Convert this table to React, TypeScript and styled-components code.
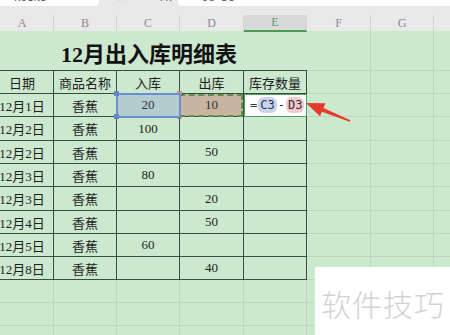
import React from "react";
import styled, { createGlobalStyle, css } from "styled-components";

const GlobalStyle = createGlobalStyle`
  html, body {
    margin: 0;
    padding: 0;
    width: 450px;
    height: 335px;
    overflow: hidden;
    background: #cce8cf;
  }
  * {
    box-sizing: border-box;
  }
`;

const COLUMNS = "63px 63px 63px 64px 63px 64px 63px 63px";
const ROWS = "40px 23px 23px 24px 23px 23px 24px 23px 23px 23px 23px 23px 23px";
const TEXT_FONT = `"Liberation Serif", "Noto Sans CJK SC", serif`;

const Page = styled.div`
  position: relative;
  width: 450px;
  height: 335px;
  overflow: hidden;
  font-family: ${TEXT_FONT};
  color: #1e1e1e;
`;

/* formula bar, scrolled so only its lower edge shows */
const FormulaBar = styled.div`
  display: flex;
  height: 6px;
  overflow: hidden;
  background: #e9e9e9;
  font-family: "Liberation Mono", monospace;
  font-size: 11px;
  color: #555;
`;

const NameBox = styled.div`
  width: 99px;
  display: flex;
  align-items: flex-end;
  padding-left: 14px;
  background: #fff;
  border-bottom-right-radius: 4px;
  & > span {
    line-height: 10px;
    margin-bottom: 3px;
  }
`;

const FxBox = styled.div`
  width: 79px;
  display: flex;
  align-items: flex-end;
  gap: 22px;
  padding-left: 18px;
  & > span {
    line-height: 10px;
    margin-bottom: 3px;
  }
`;

const FormulaInput = styled.div`
  flex: 1;
  display: flex;
  align-items: flex-end;
  padding-left: 17px;
  background: #fff;
  border-bottom-left-radius: 4px;
  & > span {
    line-height: 10px;
    margin-bottom: 3px;
  }
`;

const Gap = styled.div`
  height: 9px;
  background: #e9e9e9;
`;

const HeadRow = styled.div`
  display: grid;
  grid-template-columns: ${COLUMNS};
  height: 16px;
  margin-left: -9px;
  background: #e9e9e9;
`;

const HeadCell = styled.div<{ $active?: boolean }>`
  display: flex;
  align-items: center;
  justify-content: center;
  border-right: 1px solid #d3d3d3;
  font-family: "Liberation Serif", serif;
  font-size: 12px;
  color: #8a8a8a;
  ${(p) =>
    p.$active &&
    css`
      background: #d9d9d9;
      color: #5f9a63;
      border-bottom: 2px solid #4a9a55;
    `}
`;

const Sheet = styled.div`
  display: grid;
  grid-template-columns: ${COLUMNS};
  grid-template-rows: ${ROWS};
  margin-left: -9px;
`;

type Mark = "picked" | "marked" | "editing";

const Cell = styled.div<{ $table?: boolean; $mark?: Mark }>`
  position: relative;
  display: flex;
  align-items: center;
  justify-content: center;
  font-size: 13px;
  white-space: nowrap;
  border-right: 1px solid ${(p) => (p.$table ? "#34503b" : "#bcd7bf")};
  border-bottom: 1px solid ${(p) => (p.$table ? "#34503b" : "#bcd7bf")};
  ${(p) =>
    p.$mark === "picked" &&
    css`
      background: #b3ccd0;
      outline: 2px solid #6b8fd4;
      outline-offset: -1px;
      z-index: 2;
      color: #333;
    `}
  ${(p) =>
    p.$mark === "marked" &&
    css`
      background: #c7b4a1;
      color: #333;
      &::after {
        content: "";
        position: absolute;
        inset: 0 0 -1px -1px;
        border: 2px dashed #5f8e50;
      }
    `}
  ${(p) =>
    p.$mark === "editing" &&
    css`
      background: #fff;
      outline: 1px solid #4ea05b;
      outline-offset: -1px;
      z-index: 2;
      justify-content: flex-start;
      padding-left: 6px;
    `}
`;

const TitleCell = styled.div`
  grid-column: 1 / span 5;
  display: flex;
  align-items: center;
  justify-content: center;
  padding-top: 2px;
  font-size: 22px;
  font-weight: bold;
  color: #111;
  border-bottom: 1px solid #34503b;
`;

const Handle = styled.span<{ $color: string; $corner: "tl" | "tr" | "bl" | "br" }>`
  position: absolute;
  width: 5px;
  height: 5px;
  background: ${(p) => p.$color};
  ${(p) => (p.$corner[0] === "t" ? "top: -3px;" : "bottom: -3px;")}
  ${(p) => (p.$corner[1] === "l" ? "left: -3px;" : "right: -3px;")}
`;

const Formula = styled.div`
  display: flex;
  align-items: center;
  gap: 1px;
  font-family: "DejaVu Sans Mono", "Liberation Mono", monospace;
  font-size: 12px;
  color: #333;
`;

const Ref = styled.span<{ $tint: string }>`
  padding: 1px 2px;
  border-radius: 6px;
  background: ${(p) => p.$tint};
`;

const Watermark = styled.div`
  position: absolute;
  left: 315px;
  top: 267px;
  width: 135px;
  height: 68px;
  padding: 14px 0 0 6px;
  background: #fff;
  font-family: "Noto Sans CJK SC", sans-serif;
  font-size: 30px;
  font-weight: 300;
  letter-spacing: 1px;
  color: #d3d3d3;
`;

const Pointer = styled.svg`
  position: absolute;
  left: 300px;
  top: 94px;
`;

const letters = ["A", "B", "C", "D", "E", "F", "G", "H"];

const heading = ["日期", "商品名称", "入库", "出库", "库存数量"];

const rows: string[][] = [
  ["12月1日", "香蕉", "20", "10", ""],
  ["12月2日", "香蕉", "100", "", ""],
  ["12月2日", "香蕉", "", "50", ""],
  ["12月3日", "香蕉", "80", "", ""],
  ["12月3日", "香蕉", "", "20", ""],
  ["12月4日", "香蕉", "", "50", ""],
  ["12月5日", "香蕉", "60", "", ""],
  ["12月8日", "香蕉", "", "40", ""],
];

const EMPTY_ROWS = 3;

const markFor = (row: number, col: number): Mark | undefined => {
  if (row !== 0) return undefined;
  if (col === 2) return "picked";
  if (col === 3) return "marked";
  if (col === 4) return "editing";
  return undefined;
};

const Blank = () => (
  <>
    <Cell />
    <Cell />
    <Cell />
  </>
);

const App = () => (
  <Page>
    <GlobalStyle />
    <FormulaBar>
      <NameBox>
        <span>ROUND</span>
      </NameBox>
      <FxBox>
        <span>✕ ✓</span>
        <span>fx</span>
      </FxBox>
      <FormulaInput>
        <span>=C3-D3</span>
      </FormulaInput>
    </FormulaBar>
    <Gap />
    <HeadRow>
      {letters.map((l) => (
        <HeadCell key={l} $active={l === "E"}>
          {l}
        </HeadCell>
      ))}
    </HeadRow>
    <Sheet>
      <TitleCell>12月出入库明细表</TitleCell>
      <Blank />

      {heading.map((h) => (
        <Cell key={h} $table>
          {h}
        </Cell>
      ))}
      <Blank />

      {rows.map((row, r) => (
        <React.Fragment key={r}>
          {row.map((value, c) => {
            const mark = markFor(r, c);
            return (
              <Cell key={c} $table $mark={mark}>
                {mark === "picked" && (
                  <>
                    <Handle $color="#5f86cf" $corner="tl" />
                    <Handle $color="#5f86cf" $corner="bl" />
                  </>
                )}
                {mark === "marked" && (
                  <>
                    <Handle $color="#d98f88" $corner="tl" />
                    <Handle $color="#d98f88" $corner="bl" />
                  </>
                )}
                {mark === "editing" ? (
                  <Formula>
                    <span>=</span>
                    <Ref $tint="#c6d4f1">C3</Ref>
                    <span>-</span>
                    <Ref $tint="#f0c8cd">D3</Ref>
                  </Formula>
                ) : (
                  value
                )}
              </Cell>
            );
          })}
          <Blank />
        </React.Fragment>
      ))}

      {Array.from({ length: EMPTY_ROWS }).map((_, r) => (
        <React.Fragment key={`empty-${r}`}>
          {letters.map((l) => (
            <Cell key={l} />
          ))}
        </React.Fragment>
      ))}
    </Sheet>

    <Pointer width="56" height="32" viewBox="300 94 56 32">
      <polygon
        points="306,103 325.4,103.3 323.5,107.9 350.3,120.3 349.7,121.7 321.9,111.7 320,116.3"
        fill="#e63a2c"
      />
    </Pointer>

    <Watermark>软件技巧</Watermark>
  </Page>
);

export default App;
